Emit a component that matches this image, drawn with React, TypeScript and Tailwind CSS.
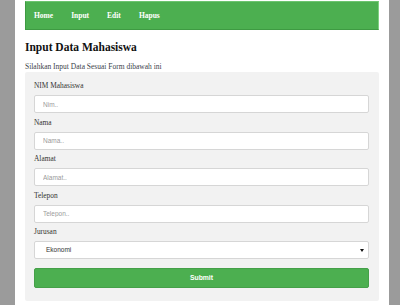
import React from "react";

const serif = { fontFamily: '"Liberation Serif", "Times New Roman", serif' };

function Field({ label, placeholder }: { label: string; placeholder: string }) {
  return (
    <div className="mb-[4.5px]">
      <div className="h-[10px] text-[7.4px] leading-[10px] text-[#333]">{label}</div>
      <input
        placeholder={placeholder}
        className="mt-[4px] block h-[18px] w-full rounded-[2px] border border-[#d6d6d6] bg-white pl-[8px] text-[6.5px] text-[#333] outline-none placeholder:text-[#9a9a9a]"
        style={{ fontFamily: '"Liberation Sans", Arial, sans-serif' }}
      />
    </div>
  );
}

export default function App() {
  return (
    <div className="flex h-[305px] w-[400px] overflow-hidden bg-[#9b9b9b]" style={serif}>
      <div className="ml-[15px] flex h-full w-[374px] flex-col bg-white px-[10px]">
        <nav className="mt-[1px] flex h-[29px] items-center gap-[18px] border-b border-l border-t border-r border-b-[#3e9a42] border-l-[#3e9a42] border-t-[#6cc46f] border-r-[#7fd082] bg-[#4caf50] pl-[8px] text-[7.5px] font-bold text-white">
          <span>Home</span>
          <span>Input</span>
          <span>Edit</span>
          <span>Hapus</span>
        </nav>
        <h1 className="mt-[10px] text-[11.5px] font-bold leading-[14px] text-[#111]">Input Data Mahasiswa</h1>
        <p className="mt-[8px] text-[7.5px] leading-[10px] text-[#3b3f4a]">
          Silahkan Input Data Sesuai Form dibawah ini
        </p>
        <div className="rounded-[2px] bg-[#f2f2f2] pb-[13px] pl-[9px] pr-[10px] pt-[9px]">
          <Field label="NIM Mahasiswa" placeholder="Nim.." />
          <Field label="Nama" placeholder="Nama.." />
          <Field label="Alamat" placeholder="Alamat.." />
          <Field label="Telepon" placeholder="Telepon.." />
          <div>
            <div className="h-[10px] text-[7.4px] leading-[10px] text-[#333]">Jurusan</div>
            <div
              className="relative mt-[4px] flex h-[18px] w-full items-center rounded-[2px] border border-[#d6d6d6] bg-white pl-[11px] text-[6.5px] text-[#333]"
              style={{ fontFamily: '"Liberation Sans", Arial, sans-serif' }}
            >
              <span>Ekonomi</span>
              <svg className="absolute right-[4px] top-[7px]" width="4" height="3" viewBox="0 0 4 3">
                <path d="M0 0 L4 0 L2 3 Z" fill="#111" />
              </svg>
            </div>
          </div>
          <button
            className="mt-[9px] flex h-[20px] w-full items-center justify-center rounded-[2px] border border-[#45a049] bg-[#4caf50] text-[6.8px] font-bold text-white"
            style={{ fontFamily: '"Liberation Sans", Arial, sans-serif' }}
          >
            Submit
          </button>
        </div>
      </div>
    </div>
  );
}
